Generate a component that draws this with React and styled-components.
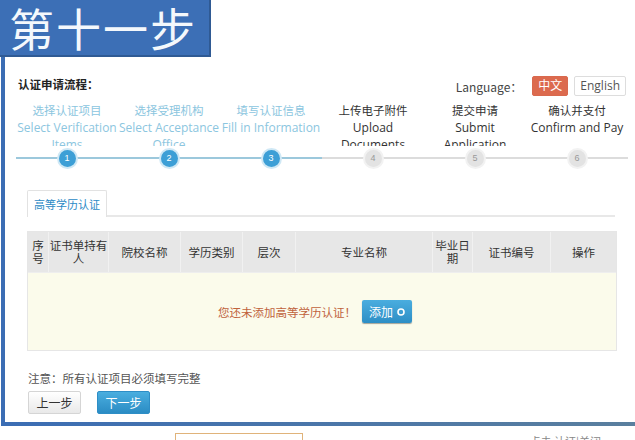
import React from "react";
import styled, { createGlobalStyle } from "styled-components";

const GlobalStyle = createGlobalStyle`
  html, body {
    margin: 0;
    padding: 0;
    background: #fff;
  }
  body {
    font-family: "Noto Sans CJK SC", "Liberation Sans", sans-serif;
    font-size: 12px;
    color: #333;
  }
`;

const steps = [
    { cn: "选择认证项目", en: "Select Verification Items", done: true },
    { cn: "选择受理机构", en: "Select Acceptance Office", done: true },
    { cn: "填写认证信息", en: "Fill in Information", done: true },
    { cn: "上传电子附件", en: "Upload Documents", done: false },
    { cn: "提交申请", en: "Submit Application", done: false },
    { cn: "确认并支付", en: "Confirm and Pay", done: false }
];

const columns = [
    { label: "序号", w: 21 },
    { label: "证书单持有人", w: 60 },
    { label: "院校名称", w: 72 },
    { label: "学历类别", w: 62 },
    { label: "层次", w: 53 },
    { label: "专业名称", w: 137 },
    { label: "毕业日期", w: 40 },
    { label: "证书编号", w: 78 },
    { label: "操作", w: 65 }
];

const App = () => {
    return (
        <Page>
            <GlobalStyle />
            <TitleBar>
                <TitleBox>第十一步</TitleBox>
            </TitleBar>
            <Frame>
                <ProcessHead>
                    <ProcessTitle>认证申请流程：</ProcessTitle>
                    <Language>
                        <span>Language：</span>
                        <LangButton active>中文</LangButton>
                        <LangButton>English</LangButton>
                    </Language>
                </ProcessHead>

                <Steps>
                    {steps.map((s, i) => (
                        <Step key={i}>
                            <StepLabel done={s.done}>
                                <div>{s.cn}</div>
                                <div>{s.en}</div>
                            </StepLabel>
                            <StepTrack done={s.done}>
                                <StepDot done={s.done}>{i + 1}</StepDot>
                            </StepTrack>
                        </Step>
                    ))}
                </Steps>

                <Tabs>
                    <Tab>高等学历认证</Tab>
                </Tabs>

                <Table>
                    <HeadRow>
                        {columns.map((c, i) => (
                            <HeadCell key={i} w={c.w}>{c.label}</HeadCell>
                        ))}
                    </HeadRow>
                    <EmptyBody>
                        <EmptyText>您还未添加高等学历认证！</EmptyText>
                        <AddButton>
                            添加
                            <PlusIcon />
                        </AddButton>
                    </EmptyBody>
                </Table>

                <Note>注意：所有认证项目必须填写完整</Note>
                <Actions>
                    <NavButton>上一步</NavButton>
                    <NavButton primary>下一步</NavButton>
                </Actions>
            </Frame>
            <Below>
                <CutBox />
                <CutText>点击 认证|关闭</CutText>
            </Below>
        </Page>
    );
};

export default App;

const Page = styled.div`
  width: 635px;
  height: 440px;
  overflow: hidden;
  background: #fff;
`;

const TitleBar = styled.div`
  display: flex;
  height: 57px;
`;

const TitleBox = styled.div`
  box-sizing: border-box;
  width: 211px;
  height: 57px;
  background: #3c6fb6;
  border-right: 2px solid #2f5a94;
  border-bottom: 2px solid #2f5a94;
  color: #f4f8fc;
  font-size: 45px;
  line-height: 55px;
  padding-left: 9px;
  letter-spacing: 2px;
  font-weight: 400;
`;

const Frame = styled.div`
  margin-left: 1px;
  height: 365px;
  border-left: 4px solid #3b6db4;
  border-bottom: 4px solid #46709a;
  border-image: linear-gradient(90deg, #3b6db4, #5a7f9e) 1;
  padding: 0 0 0 10px;
`;

const ProcessHead = styled.div`
  display: flex;
  justify-content: space-between;
  align-items: center;
  padding: 14px 9px 0 3px;
`;

const ProcessTitle = styled.div`
  font-weight: bold;
  font-size: 11.5px;
  color: #222;
`;

const Language = styled.div`
  display: flex;
  align-items: center;
  gap: 6px;
  font-size: 12px;
  color: #444;
  margin-top: 5px;
`;

const LangButton = styled.span`
  display: inline-block;
  padding: 0 5px;
  height: 18px;
  line-height: 18px;
  font-family: "Open Sans", "Noto Sans CJK SC", sans-serif;
  font-size: 12px;
  border: 1px solid ${p => (p.active ? "#d9694e" : "#ddd")};
  background: ${p => (p.active ? "#dc6a4e" : "#fff")};
  color: ${p => (p.active ? "#fff" : "#555")};
  border-radius: 2px;
  margin-left: ${p => (p.active ? "4px" : "0")};
`;

const Steps = styled.div`
  display: grid;
  grid-template-columns: repeat(6, 102px);
  margin-top: 6px;
  margin-left: 1px;
`;

const Step = styled.div`
  display: flex;
  flex-direction: column;
  align-items: center;
`;

const StepLabel = styled.div`
  height: 44px;
  overflow: hidden;
  text-align: center;
  line-height: 17px;
  width: 104px;
  font-family: "Open Sans", "Noto Sans CJK SC", sans-serif;
  font-size: 12px;
  color: ${p => (p.done ? "#8cc6e0" : "#333")};
  & > div:first-child {
    font-family: "Noto Sans CJK SC", sans-serif;
    font-size: 11.5px;
  }
`;

const StepTrack = styled.div`
  width: 100%;
  height: 22px;
  display: flex;
  justify-content: center;
  align-items: center;
  background: linear-gradient(${p => (p.done ? "#9cc8dc" : "#dcdcdc")}, ${p => (p.done ? "#9cc8dc" : "#dcdcdc")}) center / 100% 2px no-repeat;
  margin-top: 1px;
`;

const StepDot = styled.div`
  width: 17px;
  height: 17px;
  border-radius: 50%;
  background: ${p => (p.done ? "#3d9fd6" : "#e3e3e3")};
  box-shadow: 0 0 0 2px ${p => (p.done ? "#cfe8f5" : "#f2f2f2")};
  color: ${p => (p.done ? "#fff" : "#999")};
  font-family: "Liberation Sans", sans-serif;
  font-size: 9px;
  line-height: 17px;
  text-align: center;
`;

const Tabs = styled.div`
  display: flex;
  margin: 21px 0 0 12px;
  width: 588px;
  border-bottom: 2px solid #e8e8e8;
`;

const Tab = styled.div`
  padding: 0 6px;
  height: 26px;
  line-height: 26px;
  border: 1px solid #e2e2e2;
  border-bottom: 0;
  color: #2b8ac6;
  font-size: 11px;
  background: #fff;
  margin-bottom: -2px;
  border-radius: 2px 2px 0 0;
`;

const Table = styled.div`
  margin: 14px 0 0 12px;
  width: 588px;
  border: 1px solid #e6e6e6;
`;

const HeadRow = styled.div`
  display: flex;
  height: 40px;
  background: #e7e7e7;
`;

const HeadCell = styled.div`
  width: ${p => p.w}px;
  flex: none;
  display: flex;
  align-items: center;
  justify-content: center;
  text-align: center;
  font-size: 11.5px;
  line-height: 13px;
  color: #333;
  border-right: 1px solid #f1f1f1;
  box-sizing: border-box;
  &:last-child {
    border-right: 0;
    flex: 1;
  }
`;

const EmptyBody = styled.div`
  height: 77px;
  background: #fbfbeb;
  display: flex;
  align-items: center;
  justify-content: center;
  gap: 6px;
  padding-right: 14px;
  border-top: 1px solid #eee;
`;

const EmptyText = styled.span`
  color: #c0623c;
  font-size: 11.5px;
`;

const AddButton = styled.span`
  display: inline-flex;
  align-items: center;
  gap: 4px;
  height: 23px;
  padding: 0 7px;
  background: linear-gradient(#4aaddf, #2d8ec5);
  border-radius: 2px;
  box-shadow: 0 1px 1px rgba(0, 0, 0, 0.35);
  color: #fff;
  font-size: 12px;
`;

const PlusIcon = () => (
    <svg width="8" height="8" viewBox="0 0 8 8">
        <circle cx="4" cy="4" r="3" fill="none" stroke="#fff" strokeWidth="1.6" />
    </svg>
);

const Note = styled.div`
  margin: 19px 0 0 13px;
  color: #555;
  font-size: 11.5px;
  line-height: 16px;
`;

const Actions = styled.div`
  display: flex;
  gap: 16px;
  margin: 5px 0 0 13px;
`;

const NavButton = styled.span`
  width: 51px;
  height: 21px;
  line-height: 21px;
  text-align: center;
  font-size: 12px;
  border-radius: 2px;
  background: ${p => (p.primary ? "linear-gradient(#4aaedf, #2b8cc4)" : "linear-gradient(#fff, #e9e9e9)")};
  color: ${p => (p.primary ? "#fff" : "#333")};
  border: 1px solid ${p => (p.primary ? "#2e8ec6" : "#d5d5d5")};
`;

const Below = styled.div`
  display: flex;
  justify-content: space-between;
  align-items: flex-start;
  padding: 7px 34px 0 175px;
`;

const CutBox = styled.div`
  width: 126px;
  height: 20px;
  border: 1px solid #e0b37a;
`;

const CutText = styled.div`
  font-size: 11px;
  line-height: 12px;
  color: #888;
  margin-top: 2px;
`;
